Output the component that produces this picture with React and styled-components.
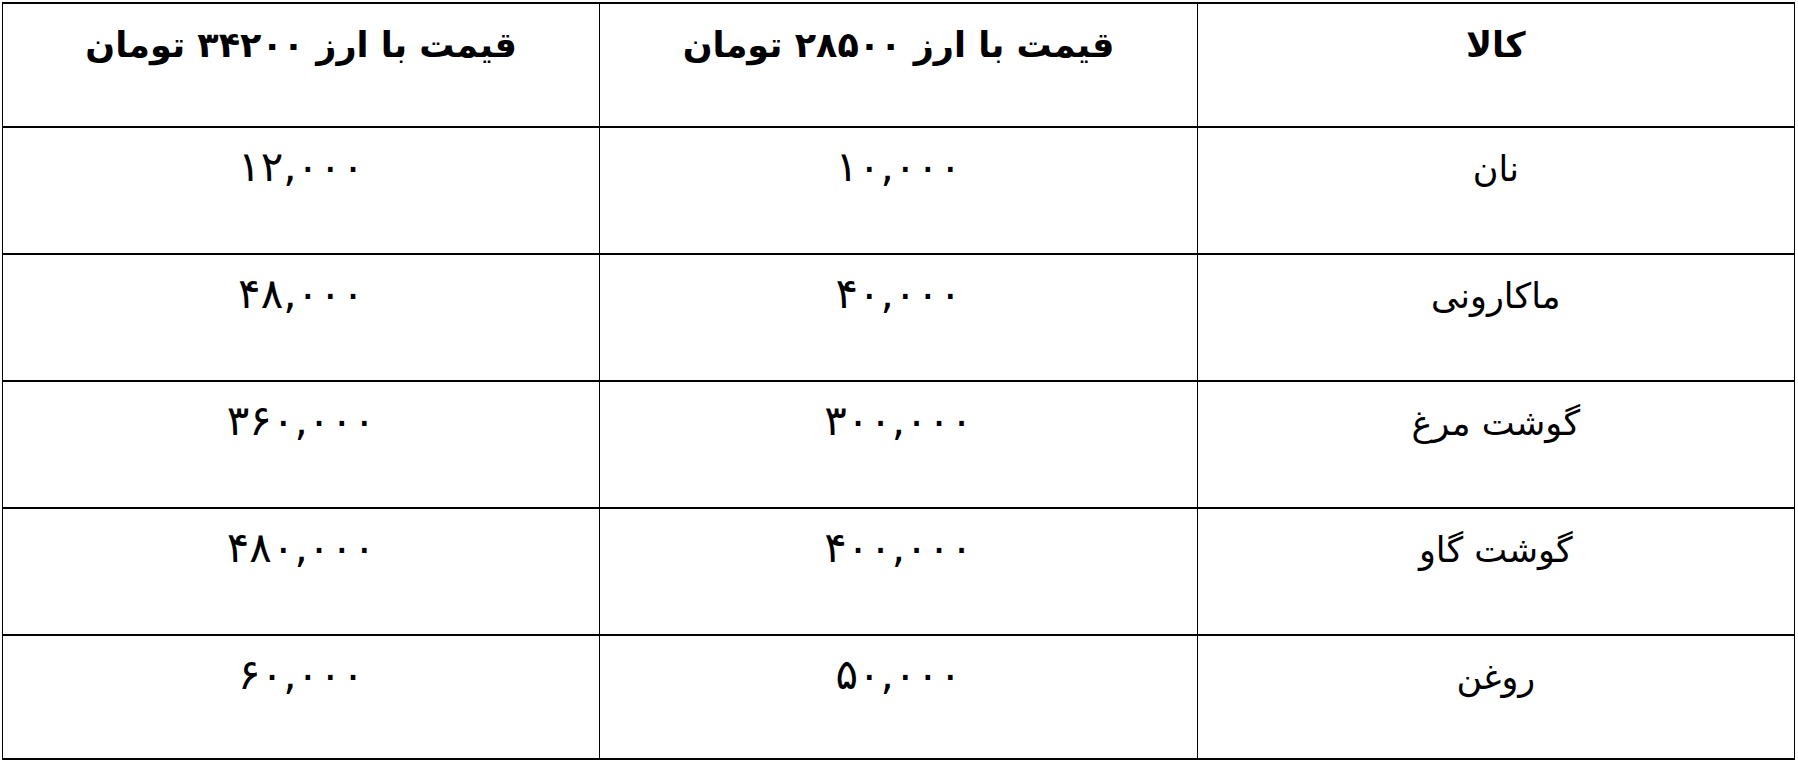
import { createGlobalStyle, styled } from "styled-components";

const GlobalStyle = createGlobalStyle`
    html, body {
        margin: 0;
        padding: 0;
        background: #ffffff;
    }

    body {
        font-family: "DejaVu Sans", "Noto Sans", sans-serif;
        color: #000000;
    }
`;

const columns = ["کالا", "قیمت با ارز ۲۸۵۰۰ تومان", "قیمت با ارز ۳۴۲۰۰ تومان"];

const rows = [
    ["نان", "۱۰,۰۰۰", "۱۲,۰۰۰"],
    ["ماکارونی", "۴۰,۰۰۰", "۴۸,۰۰۰"],
    ["گوشت مرغ", "۳۰۰,۰۰۰", "۳۶۰,۰۰۰"],
    ["گوشت گاو", "۴۰۰,۰۰۰", "۴۸۰,۰۰۰"],
    ["روغن", "۵۰,۰۰۰", "۶۰,۰۰۰"],
];

const PriceTable = () => {
    return (
        <Page>
            <Table dir="rtl">
                <thead>
                    <HeadRow>
                        {columns.map((title) => (
                            <HeadCell key={title}>{title}</HeadCell>
                        ))}
                    </HeadRow>
                </thead>
                <tbody>
                    {rows.map((row) => (
                        <BodyRow key={row[0]}>
                            {row.map((value, i) => (
                                <Cell key={i} $number={i > 0}>{value}</Cell>
                            ))}
                        </BodyRow>
                    ))}
                </tbody>
            </Table>
        </Page>
    );
};

const Page = styled.div`
    padding: 2px 0 0 2px;
`;

const Table = styled.table`
    width: 1793px;
    border-collapse: collapse;
    table-layout: fixed;
    border-top: 2px solid #000;
    border-bottom: 2px solid #000;
`;

const HeadRow = styled.tr`
    height: 124px;
    border-bottom: 2px solid #000;
`;

const BodyRow = styled.tr`
    height: 127px;
    border-bottom: 2px solid #000;

    &:last-child {
        height: 124px;
    }
`;

const HeadCell = styled.th`
    border-left: 1px solid #000;
    border-right: 1px solid #000;
    vertical-align: top;
    text-align: center;
    padding: 16px 0 0;
    font-size: 35px;
    font-weight: 700;
    line-height: 50px;
`;

const Cell = styled.td`
    border-left: 1px solid #000;
    border-right: 1px solid #000;
    vertical-align: top;
    text-align: center;
    padding: ${(p) => (p.$number ? "14px" : "16px")} 0 0;
    font-size: ${(p) => (p.$number ? "42px" : "35px")};
    line-height: 50px;
`;

export default function App() {
    return (
        <>
            <GlobalStyle />
            <PriceTable />
        </>
    );
}
